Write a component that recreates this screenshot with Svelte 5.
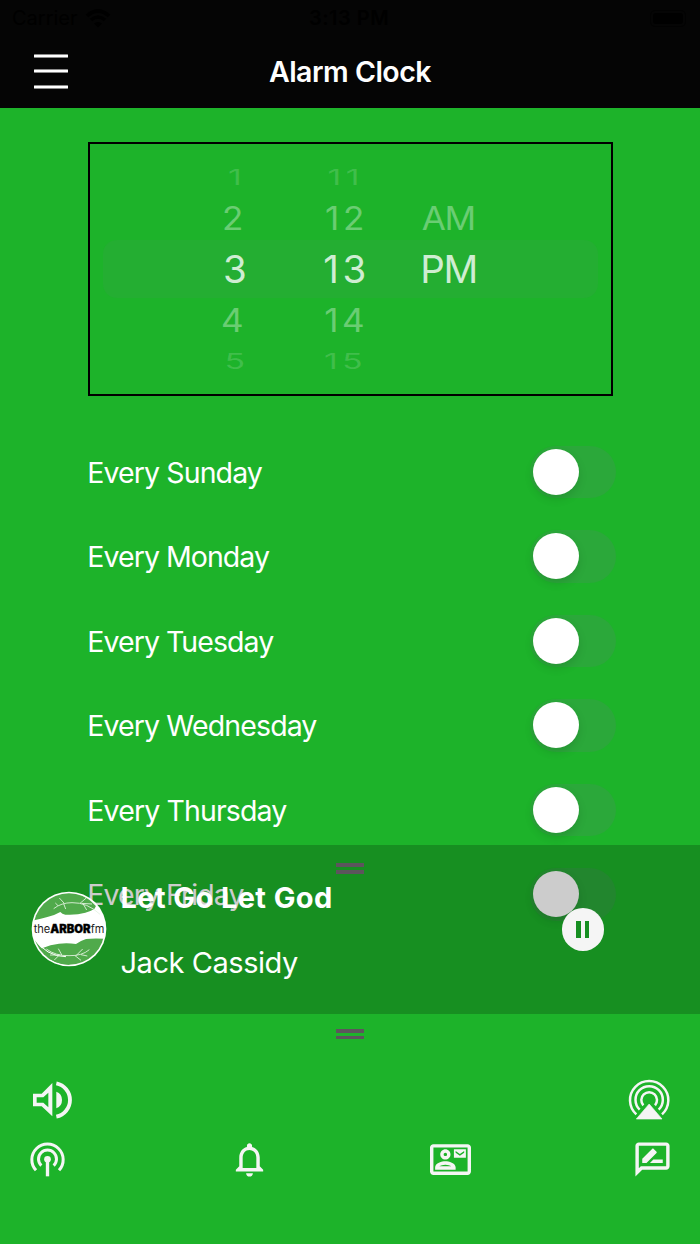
<script>
  const hours = ['1', '2', '3', '4', '5'];
  const minutes = ['11', '12', '13', '14', '15'];
  const periods = ['', 'AM', 'PM', '', ''];
  const wheels = [
    { name: 'hours', items: hours },
    { name: 'minutes', items: minutes },
    { name: 'periods', items: periods }
  ];
  const days = [
    { label: 'Every Sunday', spacing: -0.9 },
    { label: 'Every Monday', spacing: -0.95 },
    { label: 'Every Tuesday', spacing: -0.95 },
    { label: 'Every Wednesday', spacing: -0.9 },
    { label: 'Every Thursday', spacing: -0.88 },
    { label: 'Every Friday', spacing: -0.95 }
  ];
</script>

<div class="app">
  <header>
    <div class="status">
      <div class="carrier">
        <span>Carrier</span>
        <svg width="26" height="19" viewBox="0 0 26 19">
          <path d="M2 7Q13 -3 24 7M6 11Q13 5 20 11" fill="none" stroke="#000" stroke-width="3.6" />
          <path d="M9 14.5Q13 11.5 17 14.5L13 18.5Z" />
        </svg>
      </div>
      <span class="time">3:13 PM</span>
      <div class="battery"><i></i></div>
    </div>
    <div class="nav">
      <div class="menu"><i></i><i></i><i></i></div>
      <h1>Alarm Clock</h1>
    </div>
  </header>

  <main>
    <section class="picker">
      {#each wheels as wheel}
        <div class="wheel {wheel.name}">
          {#each wheel.items as item}
            <span><b>{item}</b></span>
          {/each}
        </div>
      {/each}
    </section>

    <ul>
      {#each days as day}
        <li>
          <span class="day" style="letter-spacing:{day.spacing}px">{day.label}</span>
          <div class="toggle"><i></i></div>
        </li>
      {/each}
    </ul>

    <section class="player">
      <div class="handle"><i></i><i></i></div>
      <div class="track">
        <svg class="logo" width="76" height="76" viewBox="35 34 228 228">
          <defs><clipPath id="disc"><circle cx="149" cy="148" r="107" /></clipPath></defs>
          <circle cx="149" cy="148" r="112" fill="#fff" />
          <g clip-path="url(#disc)">
            <path d="M30 124Q62 119 84 112Q108 106 123 97Q128 104 138 105Q172 107 198 99Q214 95 225 88L240 60L149 20L30 80Z" fill="#50aa4b" />
            <path d="M68 206Q94 194 119 192Q145 189 170 193Q184 183 200 178Q230 174 275 179L250 250L149 275L90 245Z" fill="#50aa4b" />
            <path d="M36 164Q76 236 150 243L150 262L50 250Z" fill="#50aa4b" />
            <path d="M40 172Q82 232 140 231M149 34Q218 42 256 116" fill="none" stroke="#fff" stroke-width="3" />
            <path d="M103 87Q126 69 158 69Q204 68 242 104M116 78L108 70M134 70L120 55M133 72L139 88M182 71L202 54M187 71L218 73M191 72L202 91M81 208Q109 229 149 228Q188 229 210 210M121 226L92 226M120 226L105 241M128 227L117 207M167 228L185 242M170 228L190 208M185 225L204 229" fill="none" stroke="#e4f3e2" stroke-width="2.6" />
          </g>
          <text x="43" y="159" font-size="34" textLength="50" lengthAdjust="spacingAndGlyphs" font-weight="400" fill="#222">the</text>
          <text x="93" y="159" font-size="34" textLength="121" lengthAdjust="spacingAndGlyphs" font-weight="900" stroke="#000" stroke-width="1">ARBOR</text>
          <text x="214" y="159" font-size="34" textLength="41" lengthAdjust="spacingAndGlyphs" font-weight="400" fill="#222">fm</text>
        </svg>
        <div class="meta">
          <strong>Let Go Let God</strong>
          <span>Jack Cassidy</span>
        </div>
        <div class="pause"><i></i><i></i></div>
      </div>
    </section>
  </main>

  <footer>
    <div class="handle"><i></i><i></i></div>
    <div class="row top">
      <svg width="40" height="40" viewBox="37 31 120 120" fill="#f5f5f5">
        <path fill-rule="evenodd" d="M40 72H66L98 40V140L66 110H40ZM51 83V99H71L86 113V69L71 83Z" />
        <path d="M110 66Q127 72 127 91Q127 110 110 116Z" />
        <path d="M110 41A51 51 0 0 1 110 141" fill="none" stroke="#f5f5f5" stroke-width="11.5" />
      </svg>
      <svg width="42" height="42" viewBox="54 41 126 126" fill="none" stroke="#f5f5f5" stroke-width="7.5">
        <path d="M79 147A57.500 57.500 0 1 1 156 147M89 133A41 41 0 1 1 146 133M100 120A23.5 23.5 0 1 1 135 120" />
        <path d="M117.500 116L156 161H79Z" fill="#f5f5f5" stroke-width="2" stroke-linejoin="round" />
      </svg>
    </div>
    <div class="row bottom">
      <svg width="41" height="41" viewBox="21 206 123 123" fill="none" stroke="#f5f5f5" stroke-width="9">
        <path d="M48 300A47 47 0 1 1 117 300M64 286A27 27 0 1 1 101 286" />
        <path d="M82.500 267V318" stroke-width="10" />
        <circle cx="82.500" cy="267" r="10" fill="#f5f5f5" stroke="none" />
      </svg>
      <svg width="41" height="41" viewBox="0 0 24 24" fill="#f5f5f5">
        <path d="M12 22c1.100 0 2-.9 2-2h-4c0 1.100.9 2 2 2zm6-6v-5c0-3.070-1.630-5.640-4.500-6.320V4c0-.83-.67-1.500-1.500-1.500s-1.500.67-1.500 1.500v.68C7.640 5.360 6 7.920 6 11v5l-2 2v1h16v-1l-2-2zm-2 1H8v-6c0-2.480 1.510-4.500 4-4.500s4 2.020 4 4.500v6z" />
      </svg>
      <svg width="41" height="41" viewBox="0 0 24 24" fill="#f5f5f5">
        <path d="M22 3H2C.9 3 0 3.900 0 5v14c0 1.100.9 2 2 2h20c1.100 0 1.990-.9 1.990-2L24 5c0-1.100-.9-2-2-2zm0 16H2V5h20v14zM21 6h-7v5h7V6zm-1 2l-2.500 1.750L15 8V7l2.500 1.750L20 7v1zM9 12c1.650 0 3-1.350 3-3s-1.350-3-3-3-3 1.350-3 3 1.350 3 3 3zm0-4c.55 0 1 .45 1 1s-.45 1-1 1-1-.45-1-1 .45-1 1-1zm6 8.590c0-2.500-3.970-3.580-6-3.580s-6 1.080-6 3.580V18h12v-1.410zM5.480 16c.74-.5 2.220-1 3.520-1s2.770.49 3.520 1H5.480z" />
      </svg>
      <svg width="41" height="41" viewBox="0 0 24 24" fill="#f5f5f5">
        <path d="M20 2H4c-1.100 0-2 .9-2 2v18l4-4h14c1.100 0 2-.9 2-2V4c0-1.100-.9-2-2-2zm0 14H5.170L4 17.170V4h16v12zM10.500 14H18v-2h-5.500zM14.360 8.130c.2-.2.2-.51 0-.71l-1.770-1.770c-.2-.2-.51-.2-.71 0L6 11.530V14h2.470l5.890-5.870z" />
      </svg>
    </div>
  </footer>
</div>

<style>
  :global(body) { margin: 0; }
  .app {
    width: 700px;
    height: 1244px;
    overflow: hidden;
    display: flex;
    flex-direction: column;
    background: #1db32a;
    color: #fff;
    font-family: Inter, 'Liberation Sans', sans-serif;
  }
  .app * { box-sizing: border-box; }
  header { height: 108.300px; flex: none; background: #050505; }
  .status {
    height: 34px;
    padding: 2px 14px 0 12px;
    display: grid;
    grid-template-columns: 1fr auto 1fr;
    align-items: center;
    color: #000;
    font-size: 20px;
  }
  .carrier { display: flex; align-items: center; gap: 7px; }
  .time { font-weight: 600; letter-spacing: 0.500px; }
  .battery {
    justify-self: end;
    width: 36px;
    height: 17px;
    padding: 2px;
    border: 1px solid #020202;
    border-radius: 5px;
  }
  .battery i { display: block; height: 100%; border-radius: 3px; background: #000; }
  .nav {
    height: 74px;
    padding: 0 34px;
    display: grid;
    grid-template-columns: 34px 1fr 34px;
    align-items: center;
  }
  .menu { display: flex; flex-direction: column; gap: 11.500px; }
  .menu i { height: 4px; border-radius: 1px; background: #fff; border: solid #8a8a8a; border-width: 0.500px 0; }
  h1 { margin: 0; text-align: center; font-size: 28.500px; line-height: 37px; font-weight: 600; letter-spacing: -0.500px; }

  main { position: relative; height: 905.700px; flex: none; overflow: hidden; padding: 34px 88px 0; }
  .picker {
    width: 524.500px;
    height: 253.500px;
    border: 2px solid #000;
    display: grid;
    grid-template-columns: 110px 109px 99px;
    align-content: center;
    justify-content: start;
    padding-left: 90px;
    isolation: isolate;
    position: relative;
  }
  .picker::before {
    content: '';
    position: absolute;
    z-index: -1;
    left: 13px;
    right: 13px;
    top: 96px;
    height: 58px;
    border-radius: 14px;
    background: #24ae32;
  }
  .wheel { display: grid; grid-template-rows: 38px 44px 58px 45px 37px; }
  .wheel span { display: flex; align-items: center; justify-content: center; }
  .wheel b { font-weight: 400; font-size: 38.500px; line-height: 1; color: rgba(255, 255, 255, 0.78); }
  .wheel span:nth-child(2) b, .wheel span:nth-child(4) b { transform: scale(0.91, 0.83); color: rgba(255, 255, 255, 0.35); }
  .wheel span:nth-child(1) b, .wheel span:nth-child(5) b { transform: scale(0.88, 0.56); color: rgba(255, 255, 255, 0.16); }
  .hours span:nth-child(even) { padding-right: 5px; }
  .minutes b { letter-spacing: 3.500px; margin-right: -4px; }
  .minutes span:nth-child(even) b { letter-spacing: 4px; margin-right: -4px; }
  .minutes span:nth-child(1) b, .minutes span:nth-child(5) b { letter-spacing: 5px; margin-right: -3px; }
  .periods b { letter-spacing: -1.500px; }

  ul { list-style: none; margin: 0; padding: 34px 0 0; }
  li { height: 84.500px; display: flex; align-items: center; justify-content: space-between; }
  .day { margin-left: -0.700px; padding-top: 1px; font-size: 28.500px; line-height: 36px; white-space: nowrap; }
  .toggle {
    width: 86px;
    height: 52.500px;
    padding: 3px;
    margin-right: -4px;
    border-radius: 27px;
    background: #2ba83a;
  }
  .toggle i {
    display: block;
    width: 46px;
    height: 46px;
    border-radius: 50%;
    background: #fff;
    box-shadow: 0 4px 10px rgba(0, 0, 0, 0.12);
  }

  .player { position: absolute; left: 0; right: 0; bottom: 0; height: 169px; background: rgba(0, 0, 0, 0.2); }
  .handle { width: 28px; margin: 0 auto; display: flex; flex-direction: column; gap: 3px; }
  .handle i { height: 3.600px; background: #5c555c; }
  .player .handle { padding-top: 18.500px; }
  .track { display: flex; height: 112px; padding: 0 96px 0 31px; align-items: center; }
  .logo { flex: none; margin-top: -1px; font-family: Inter, sans-serif; }
  .meta { flex: 1; padding: 1px 0 0 13.500px; display: flex; flex-direction: column; gap: 29px; white-space: nowrap; }
  .meta strong, .meta span { font-size: 29px; line-height: 36px; letter-spacing: -0.450px; }
  .meta strong { font-weight: 700; letter-spacing: 0.400px; }
  .pause {
    width: 42.500px;
    height: 42.500px;
    border-radius: 50%;
    background: #f5f5f5;
    display: flex;
    align-items: center;
    justify-content: center;
    gap: 4.300px;
  }
  .pause i { width: 4.300px; height: 17px; background: #178f22; }

  footer { flex: 1; padding-top: 15px; }
  .row { display: flex; align-items: center; justify-content: space-between; }
  .row svg { display: block; }
  .top { height: 42px; margin-top: 39.500px; padding: 0 30px 0 32.300px; }
  .bottom { height: 41px; margin-top: 18.300px; padding: 0 27px; }
</style>
